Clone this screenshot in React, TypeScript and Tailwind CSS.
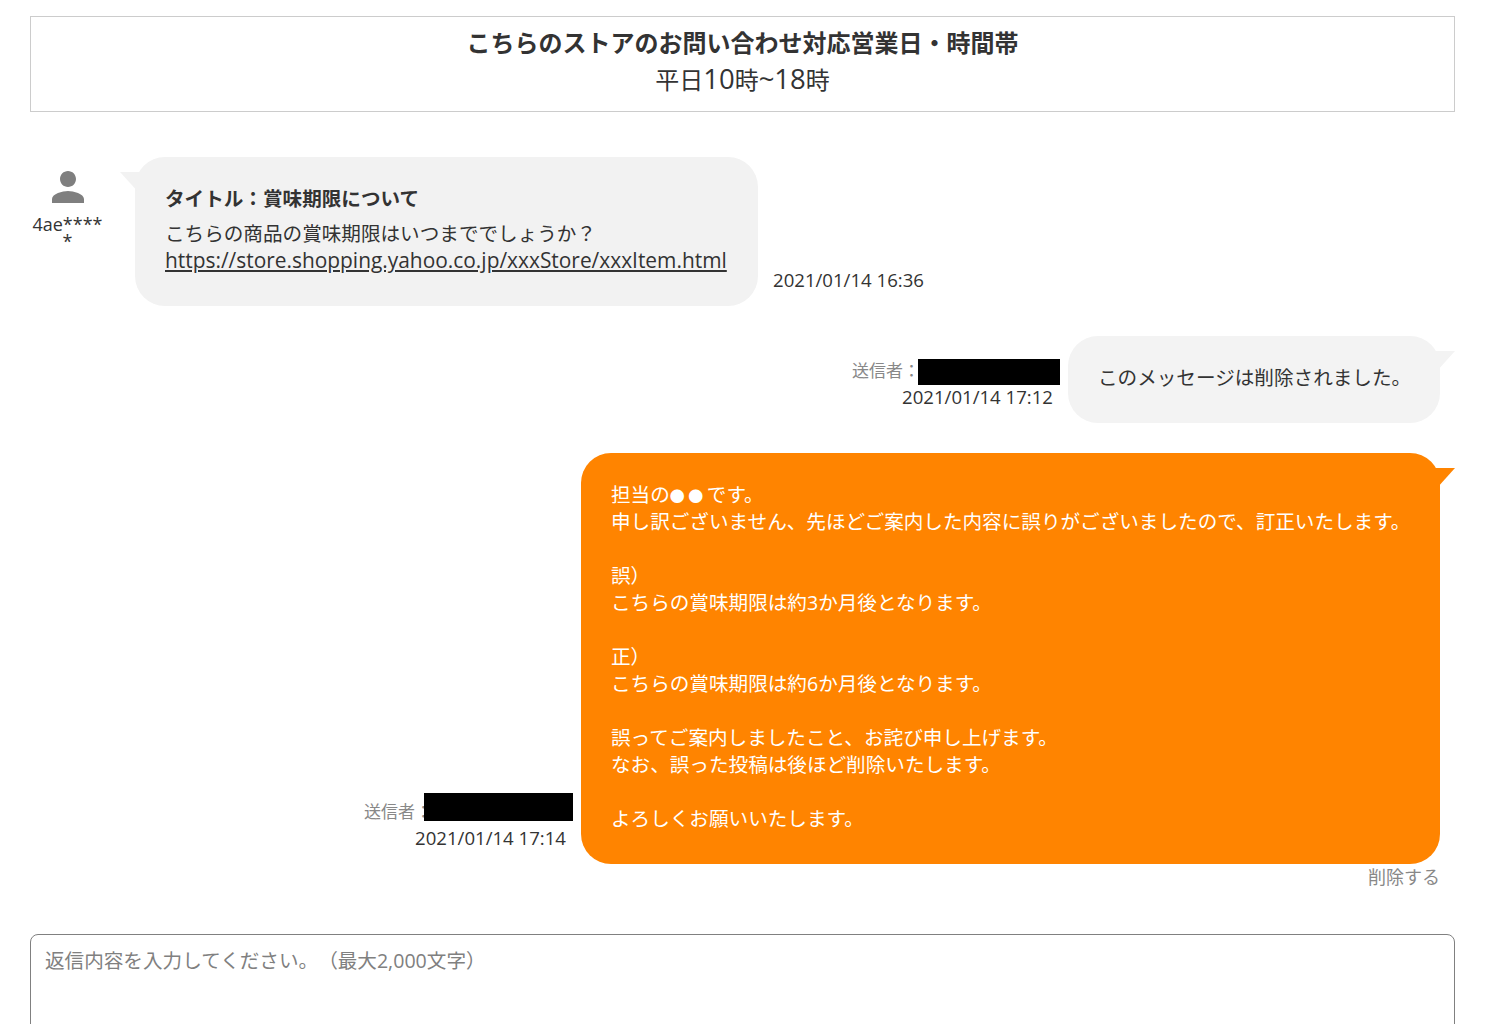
const font = { fontFamily: '"Open Sans", "Noto Sans CJK JP", sans-serif' };

function TailLeft() {
  return (
    <svg className="absolute left-[-15px] top-[15px]" width="20" height="22" viewBox="0 0 20 22">
      <path d="M0 0H20V22Z" fill="#f2f2f2" />
    </svg>
  );
}

function TailRight({ color }: { color: string }) {
  return (
    <svg className="absolute right-[-15px] top-[15px]" width="20" height="20" viewBox="0 0 20 20">
      <path d="M20 0H0V20H2Z" fill={color} />
    </svg>
  );
}

function SenderMeta({ time, boxClass }: { time: string; boxClass: string }) {
  return (
    <div className="mb-[14px] mr-2 flex flex-col items-end">
      <div className="flex h-[24px] items-start">
        <span className="pt-[1px] text-[17px] leading-[24px] text-[#888888]">送信者：</span>
        <span className={`${boxClass} block bg-black`} />
      </div>
      <span className="mr-[7px] mt-[3px] text-[18.6px] leading-[24px] text-[#333333]">{time}</span>
    </div>
  );
}

export default function App() {
  return (
    <div className="h-[1024px] w-[1510px] overflow-hidden bg-white text-[#333333] [text-spacing-trim:space-all]" style={font}>
      <div className="w-[1485px] px-[30px] pt-4">
        <div className="flex h-[96px] flex-col items-center justify-center border border-[#cccccc] pb-[5px] text-[24px] leading-[36px]">
          <p className="-mt-[1px] mb-[1px] font-bold">こちらのストアのお問い合わせ対応営業日・時間帯</p>
          <p>
            平日<span className="text-[27.5px] leading-none">10</span>時<span className="text-[27.5px] leading-none">~18</span>時
          </p>
        </div>

        <div className="mt-[45px] flex items-end">
          <div className="w-[75px] self-start pt-[6px] text-center">
            <svg className="mx-auto" width="48" height="48" viewBox="0 0 24 24">
              <path
                fill="#7f7f7f"
                d="M12 12c2.21 0 4-1.79 4-4s-1.79-4-4-4-4 1.79-4 4 1.79 4 4 4zm0 2c-2.67 0-8 1.34-8 4v2h16v-2c0-2.66-5.33-4-8-4z"
              />
            </svg>
            <p className="mt-[5px] text-[18px] leading-[17px]">
              4ae****
              <br />*
            </p>
          </div>
          <div className="relative ml-[30px] h-[149px] w-[623px] rounded-[30px] bg-[#f2f2f2] px-[30px] pt-[28px] text-[19.6px] leading-[27px]">
            <TailLeft />
            <p className="mb-[8px] font-bold">タイトル：賞味期限について</p>
            <p>こちらの商品の賞味期限はいつまででしょうか？</p>
            <a className="block text-[20.9px] leading-[27px] underline">https://store.shopping.yahoo.co.jp/xxxStore/xxxItem.html</a>
          </div>
          <span className="mb-[14px] ml-[15px] text-[18.6px] leading-[24px]">2021/01/14 16:36</span>
        </div>

        <div className="mr-[15px] mt-[30px] flex items-end justify-end">
          <SenderMeta time="2021/01/14 17:12" boxClass="mt-[1px] -ml-[2px] h-[26px] w-[142px]" />
          <div className="relative h-[87px] w-[372px] whitespace-nowrap rounded-[30px] bg-[#f3f3f3] px-[30px] pt-[28px] text-[19.6px] leading-[27px]">
            <TailRight color="#f3f3f3" />
            <p>このメッセージは削除されました。</p>
          </div>
        </div>

        <div className="mr-[15px] mt-[30px] flex items-end justify-end">
          <SenderMeta time="2021/01/14 17:14" boxClass="-mt-[6px] -ml-[8px] h-[28px] w-[149px]" />
          <div className="relative h-[411px] w-[859px] whitespace-nowrap rounded-[30px] bg-[#ff8400] px-[30px] pt-[28px] text-[19.6px] leading-[27px] text-white">
            <TailRight color="#ff8400" />
            <p>
              担当の<span className="text-[15px] leading-none tracking-[3.5px]">●●</span>です。
            </p>
            <p>申し訳ございません、先ほどご案内した内容に誤りがございましたので、訂正いたします。</p>
            <p className="h-[27px]" />
            <p>誤）</p>
            <p>こちらの賞味期限は約3か月後となります。</p>
            <p className="h-[27px]" />
            <p>正）</p>
            <p>こちらの賞味期限は約6か月後となります。</p>
            <p className="h-[27px]" />
            <p>誤ってご案内しましたこと、お詫び申し上げます。</p>
            <p>なお、誤った投稿は後ほど削除いたします。</p>
            <p className="h-[27px]" />
            <p>よろしくお願いいたします。</p>
          </div>
        </div>

        <div className="mr-[15px] mt-[1px] text-right text-[18px] leading-[24px] text-[#888888]">削除する</div>

        <textarea
          className="mt-[45px] block h-[150px] w-full resize-none rounded-[8px] border border-[#808080] px-[14px] py-[10px] text-[19.6px] leading-[32px] outline-none placeholder:text-[#808080]"
          placeholder="返信内容を入力してください。（最大2,000文字）"
          style={font}
        />
      </div>
    </div>
  );
}
